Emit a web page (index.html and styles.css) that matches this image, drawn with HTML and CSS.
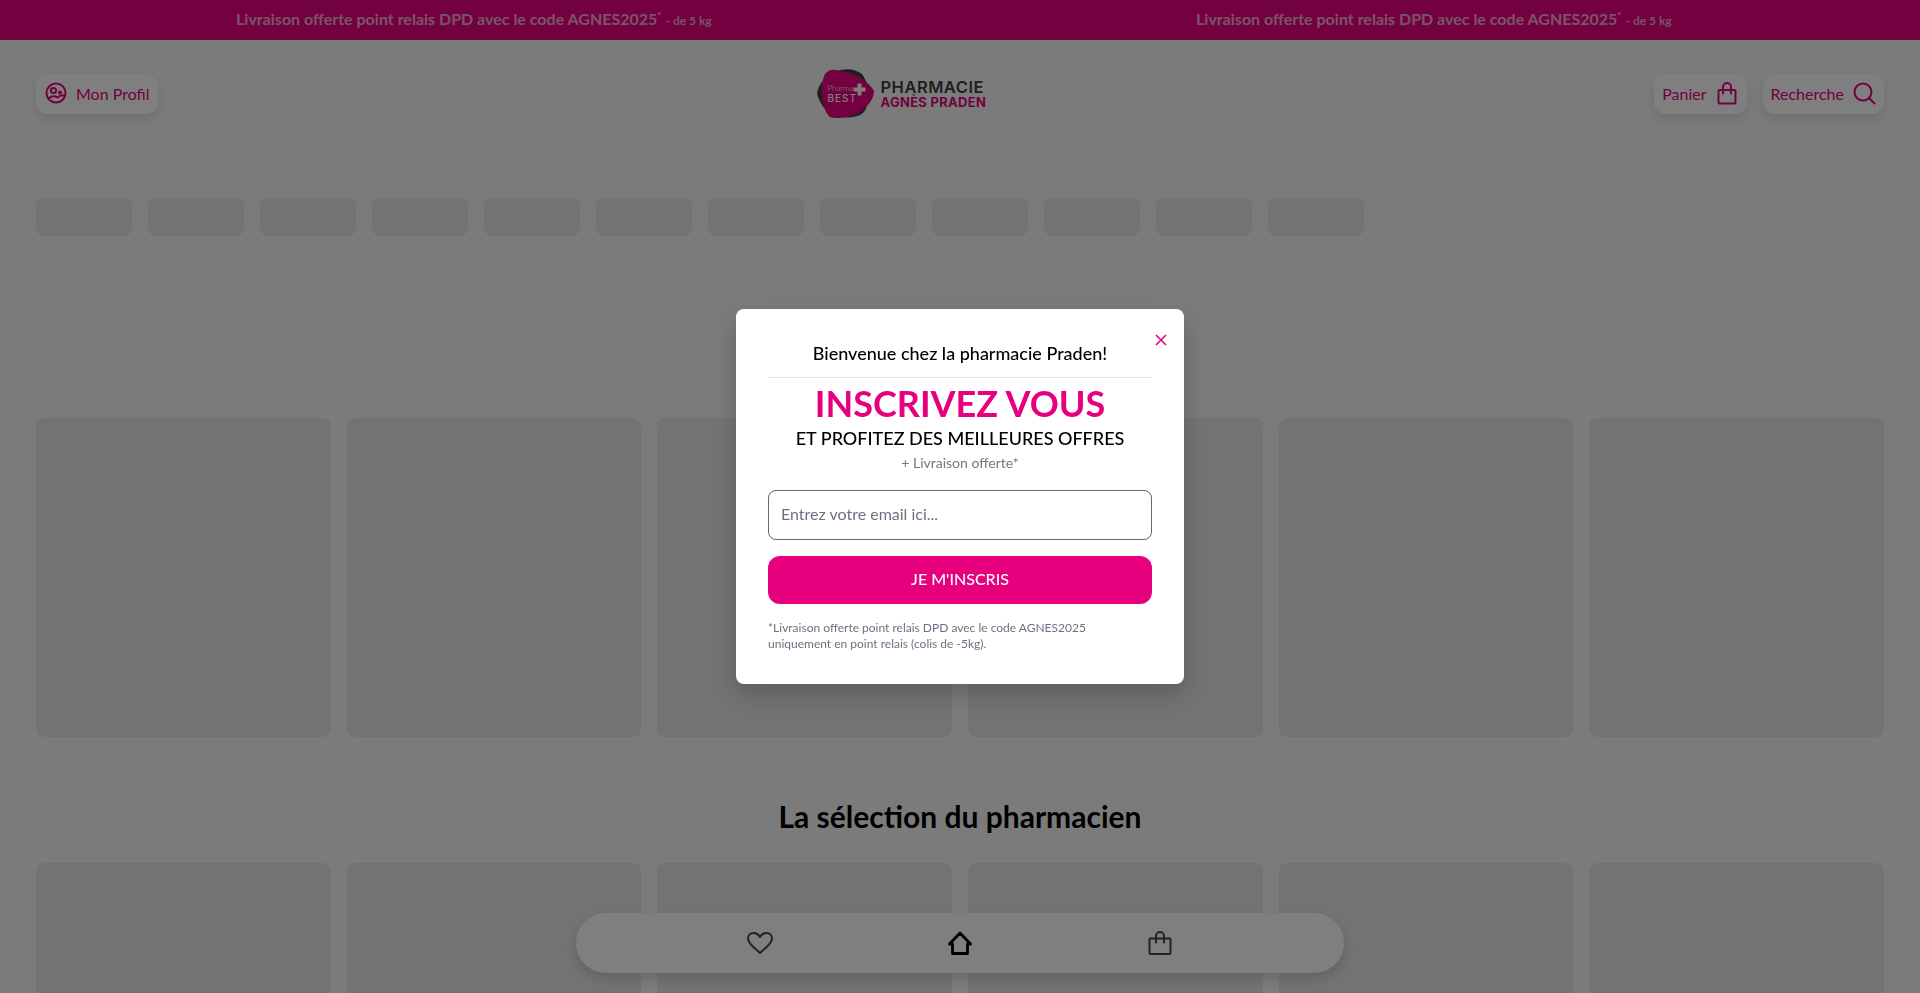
FILE: index.html
```html
<!DOCTYPE html>
<html lang="fr">
<head>
  <meta charset="UTF-8" />
  <meta name="viewport" content="width=device-width, initial-scale=1.0"/>
  <title>Pharmacie Agnès Praden</title>
  <link rel="stylesheet" href="styles.css">
</head>
<body>
  <!-- Bandeau promo -->
  <div class="promo">
    <div class="promo-item"><span>Livraison offerte point relais DPD avec le code AGNES2025<sup>*</sup></span> <small>- de 5 kg</small></div>
    <div class="promo-item"><span>Livraison offerte point relais DPD avec le code AGNES2025<sup>*</sup></span> <small>- de 5 kg</small></div>
  </div>

  <header>
    <div class="header-side">
      <a class="pill-btn" href="#">
        <svg class="icon" viewBox="0 0 24 24" fill="none" stroke="currentColor" stroke-width="2" stroke-linecap="round">
          <circle cx="12" cy="12" r="9.500"/>
          <circle cx="9.500" cy="9.500" r="2.600"/>
          <circle cx="16" cy="11.500" r="2" fill="currentColor" stroke="none"/>
          <path d="M4.500 17.500c3-2.500 6.500-2.500 9-1 2-2 4.500-2.500 6.500-2"/>
        </svg>
        Mon Profil
      </a>
    </div>
    <a class="logo" href="#">
      <span class="logo-mark">
        <svg viewBox="0 0 58 50" class="logo-blob">
          <path d="M0 24C2 14 8 8 18 3C26-1 38-1 45 5C50 12 52 20 52 28C50 36 50 40 46 44C38 50 28 49 18 47C8 42 2 34 0 24z" fill="#3a3f44"/>
          <path d="M8 5C11 1 15 0 19 1C27 3 34 3 40 7C47 11 54 16 57 22C57 27 54 33 50 37C45 41 40 46 33 47C26 49 18 50 13 48C9 45 7 38 6 32C4 24 4 13 8 5z" fill="#e6007e"/>
          <path d="M41 14.500h3a.5.5 0 0 1 .5.5v3.500H48a.5.5 0 0 1 .5.5v3a.5.5 0 0 1-.5.5h-3.500V26a.5.5 0 0 1-.5.5h-3a.5.5 0 0 1-.5-.5v-3.500H37a.5.5 0 0 1-.5-.5v-3a.5.5 0 0 1 .5-.5h3.500V15a.5.5 0 0 1 .5-.5z" fill="#fff"/>
        </svg>
        <span class="logo-mark-text"><i>Pharma</i><b>BEST</b></span>
      </span>
      <span class="logo-text">
        <span class="logo-line1">PHARMACIE</span>
        <span class="logo-line2">AGNÈS PRADEN</span>
      </span>
    </a>
    <div class="header-side">
      <a class="pill-btn" href="#">
        Panier
        <svg class="icon" viewBox="0 0 24 24" fill="none" stroke="currentColor" stroke-width="2" stroke-linejoin="round" stroke-linecap="round">
          <path d="M4.500 9h15a1 1 0 0 1 1 1v11.500a1 1 0 0 1-1 1h-15a1 1 0 0 1-1-1V10a1 1 0 0 1 1-1z"/>
          <path d="M8 12.500V6a4 4 0 0 1 8 0v6.500"/>
        </svg>
      </a>
      <a class="pill-btn" href="#">
        Recherche
        <svg class="icon" viewBox="0 0 24 24" fill="none" stroke="currentColor" stroke-width="2" stroke-linecap="round">
          <circle cx="11" cy="11" r="8.500"/>
          <path d="M17.500 17.500L22.500 22.500"/>
        </svg>
      </a>
    </div>
  </header>

  <!-- Squelettes du chargement -->
  <div class="cat-row">
    <div class="skeleton cat"></div><div class="skeleton cat"></div><div class="skeleton cat"></div>
    <div class="skeleton cat"></div><div class="skeleton cat"></div><div class="skeleton cat"></div>
    <div class="skeleton cat"></div><div class="skeleton cat"></div><div class="skeleton cat"></div>
    <div class="skeleton cat"></div><div class="skeleton cat"></div><div class="skeleton cat"></div>
  </div>

  <section class="product-grid first-grid">
    <div class="skeleton card"></div><div class="skeleton card"></div><div class="skeleton card"></div>
    <div class="skeleton card"></div><div class="skeleton card"></div><div class="skeleton card"></div>
  </section>

  <h2 class="section-title">La sélection du pharmacien</h2>

  <section class="product-grid">
    <div class="skeleton card"></div><div class="skeleton card"></div><div class="skeleton card"></div>
    <div class="skeleton card"></div><div class="skeleton card"></div><div class="skeleton card"></div>
  </section>

  <!-- Barre du bas -->
  <nav class="bottom-nav">
    <a href="#">
      <svg class="nav-heart" viewBox="0 0 26 22" fill="none" stroke="currentColor" stroke-width="2" stroke-linejoin="round">
        <path d="M13 21C8 16 1 12 1 6.500C1 3 3.500 1 6.500 1C9 1 11.500 2.500 13 5C14.500 2.500 17 1 19.500 1C22.500 1 25 3 25 6.500C25 12 18 16 13 21z"/>
      </svg>
    </a>
    <a class="active" href="#">
      <svg viewBox="0 0 24 24" fill="none" stroke="currentColor" stroke-width="2.800" stroke-linejoin="round">
        <path d="M12 2L22.500 13H19.500V22.500H4.500V13H1.500z"/>
      </svg>
    </a>
    <a href="#">
      <svg viewBox="0 0 24 24" fill="none" stroke="currentColor" stroke-width="2" stroke-linejoin="round" stroke-linecap="round">
        <path d="M2.500 7.500h19a1 1 0 0 1 1 1V22a1 1 0 0 1-1 1h-19a1 1 0 0 1-1-1V8.500a1 1 0 0 1 1-1z"/>
        <path d="M8 11.500V5a4 4 0 0 1 8 0v6.500"/>
      </svg>
    </a>
  </nav>

  <div class="overlay">
    <div class="modal">
      <button class="modal-close" aria-label="Fermer">
        <svg viewBox="0 0 12 12" stroke="currentColor" stroke-width="1.600" fill="none"><path d="M1 1l10 10M11 1L1 11"/></svg>
      </button>
      <h3 class="modal-welcome">Bienvenue chez la pharmacie Praden!</h3>
      <h2 class="modal-title">INSCRIVEZ VOUS</h2>
      <p class="modal-sub">ET PROFITEZ DES MEILLEURES OFFRES</p>
      <p class="modal-extra">+ Livraison offerte*</p>
      <input class="modal-input" type="email" placeholder="Entrez votre email ici...">
      <button class="modal-submit">JE M'INSCRIS</button>
      <p class="modal-note">*Livraison offerte point relais DPD avec le code AGNES2025<br>uniquement en point relais (colis de -5kg).</p>
    </div>
  </div>
</body>
</html>
```

FILE: styles.css
```css
:root {
  --pink: #e6007e;
  --skeleton: #e5e7e9;
}

* {
  box-sizing: border-box;
}

html, body {
  height: 100%;
  overflow: hidden;
}

body {
  margin: 0;
  font-family: Lato, 'Liberation Sans', sans-serif;
  background-color: #f7f7f7;
  color: #000;
}

a {
  text-decoration: none;
  color: inherit;
}

.promo {
  display: flex;
  height: 40px;
  background-color: var(--pink);
  color: #fff;
}

.promo-item {
  width: 50%;
  padding-left: 236px;
  line-height: 38px;
  font-size: 16px;
  font-weight: 700;
  opacity: .65;
  white-space: nowrap;
}

.promo-item sup {
  font-size: 10px;
  line-height: 0;
}

.promo-item small {
  font-size: 12px;
}

header {
  display: flex;
  align-items: center;
  justify-content: space-between;
  padding: 29px 36px 0;
}

.header-side {
  display: flex;
  gap: 16px;
}

.pill-btn {
  display: flex;
  align-items: center;
  gap: 8px;
  height: 40px;
  padding: 0 8px 2px;
  border-radius: 12px;
  background-color: #fff;
  box-shadow: 0 6px 12px rgba(0,0,0,.1);
  color: var(--pink);
  font-size: 16px;
}

.pill-btn .icon {
  width: 24px;
  height: 24px;
}

.logo {
  display: flex;
  align-items: center;
  gap: 5px;
  margin-right: 8px;
}

.logo-mark {
  position: relative;
  display: block;
  width: 58px;
  height: 50px;
}

.logo-blob {
  display: block;
  width: 58px;
  height: 50px;
  overflow: visible;
}

.logo-mark-text {
  position: absolute;
  left: 10px;
  top: 15px;
  display: flex;
  flex-direction: column;
  color: #fff;
}

.logo-mark-text i {
  font-style: normal;
  font-weight: 300;
  font-size: 8px;
  line-height: 9px;
}

.logo-mark-text b {
  font-family: Inter, sans-serif;
  font-weight: 500;
  font-size: 10px;
  line-height: 10px;
  letter-spacing: 1px;
}

.logo-text {
  display: flex;
  flex-direction: column;
  font-family: Inter, sans-serif;
  white-space: nowrap;
}

.logo-line1 {
  font-size: 16.500px;
  line-height: 16px;
  font-weight: 600;
  letter-spacing: .5px;
  color: #3a3f44;
}

.logo-line2 {
  font-size: 13px;
  line-height: 14px;
  font-weight: 700;
  letter-spacing: .3px;
  color: var(--pink);
}

.cat-row {
  display: flex;
  gap: 16px;
  padding: 0 36px;
  margin-top: 79px;
}

.skeleton {
  background-color: var(--skeleton);
  border-radius: 8px;
}

.cat {
  width: 96px;
  height: 38px;
}

.product-grid {
  display: grid;
  grid-template-columns: repeat(6, 1fr);
  gap: 16px;
  padding: 0 36px;
}

.first-grid {
  margin-top: 182px;
}

.card {
  height: 319px;
}

.section-title {
  margin: 59px 0 27px;
  text-align: center;
  font-size: 30px;
  line-height: 40px;
  font-weight: 700;
}

.bottom-nav {
  position: fixed;
  left: 50%;
  bottom: 20px;
  transform: translateX(-50%);
  width: 768px;
  height: 60px;
  display: grid;
  grid-template-columns: repeat(3, 200px);
  justify-content: center;
  justify-items: center;
  align-items: center;
  border-radius: 30px;
  background-color: #fff;
  box-shadow: 0 6px 12px rgba(0,0,0,.15);
  color: #444;
}

.bottom-nav svg {
  display: block;
  width: 24px;
  height: 24px;
}

.bottom-nav .nav-heart {
  width: 26px;
  height: 22px;
}

.bottom-nav .active {
  color: #000;
}

.overlay {
  position: fixed;
  inset: 0;
  display: flex;
  align-items: center;
  justify-content: center;
  background-color: rgba(0,0,0,.5);
  backdrop-filter: blur(.5px);
}

.modal {
  position: relative;
  width: 448px;
  height: 375px;
  padding: 32px;
  background-color: #fff;
  border-radius: 8px;
  box-shadow: 0 10px 25px rgba(0,0,0,.2);
  text-align: center;
}

.modal-close {
  position: absolute;
  top: 25px;
  right: 17px;
  width: 12px;
  height: 12px;
  padding: 0;
  border: none;
  background: none;
  color: var(--pink);
  cursor: pointer;
}

.modal-close svg {
  display: block;
}

.modal-welcome {
  margin: 0;
  padding-bottom: 12px;
  border-bottom: 1px solid #e5e7eb;
  font-size: 18px;
  line-height: 24px;
  font-weight: 500;
}

.modal-title {
  margin: 5px 0 0;
  color: var(--pink);
  font-size: 36px;
  line-height: 40px;
  font-weight: 700;
}

.modal-sub {
  margin: 3px 0 0;
  font-size: 18px;
  line-height: 24px;
  font-weight: 500;
}

.modal-extra {
  margin: 3px 0 0;
  color: #777;
  font-size: 14px;
  line-height: 20px;
}

.modal-input {
  display: block;
  width: 100%;
  height: 50px;
  margin-top: 17px;
  padding: 0 12px 4px;
  border: 1px solid #666;
  border-radius: 8px;
  font-family: inherit;
  font-size: 16px;
  outline: none;
}

.modal-input::placeholder {
  color: #6b7280;
}

.modal-submit {
  display: block;
  width: 100%;
  height: 48px;
  margin-top: 16px;
  padding: 0 0 4px;
  border: none;
  border-radius: 12px;
  background-color: var(--pink);
  color: #fff;
  font-family: inherit;
  font-size: 16px;
  font-weight: 500;
  cursor: pointer;
}

.modal-note {
  margin: 16px 0 0;
  text-align: left;
  color: #6b7280;
  font-size: 12px;
  line-height: 16px;
}
```
